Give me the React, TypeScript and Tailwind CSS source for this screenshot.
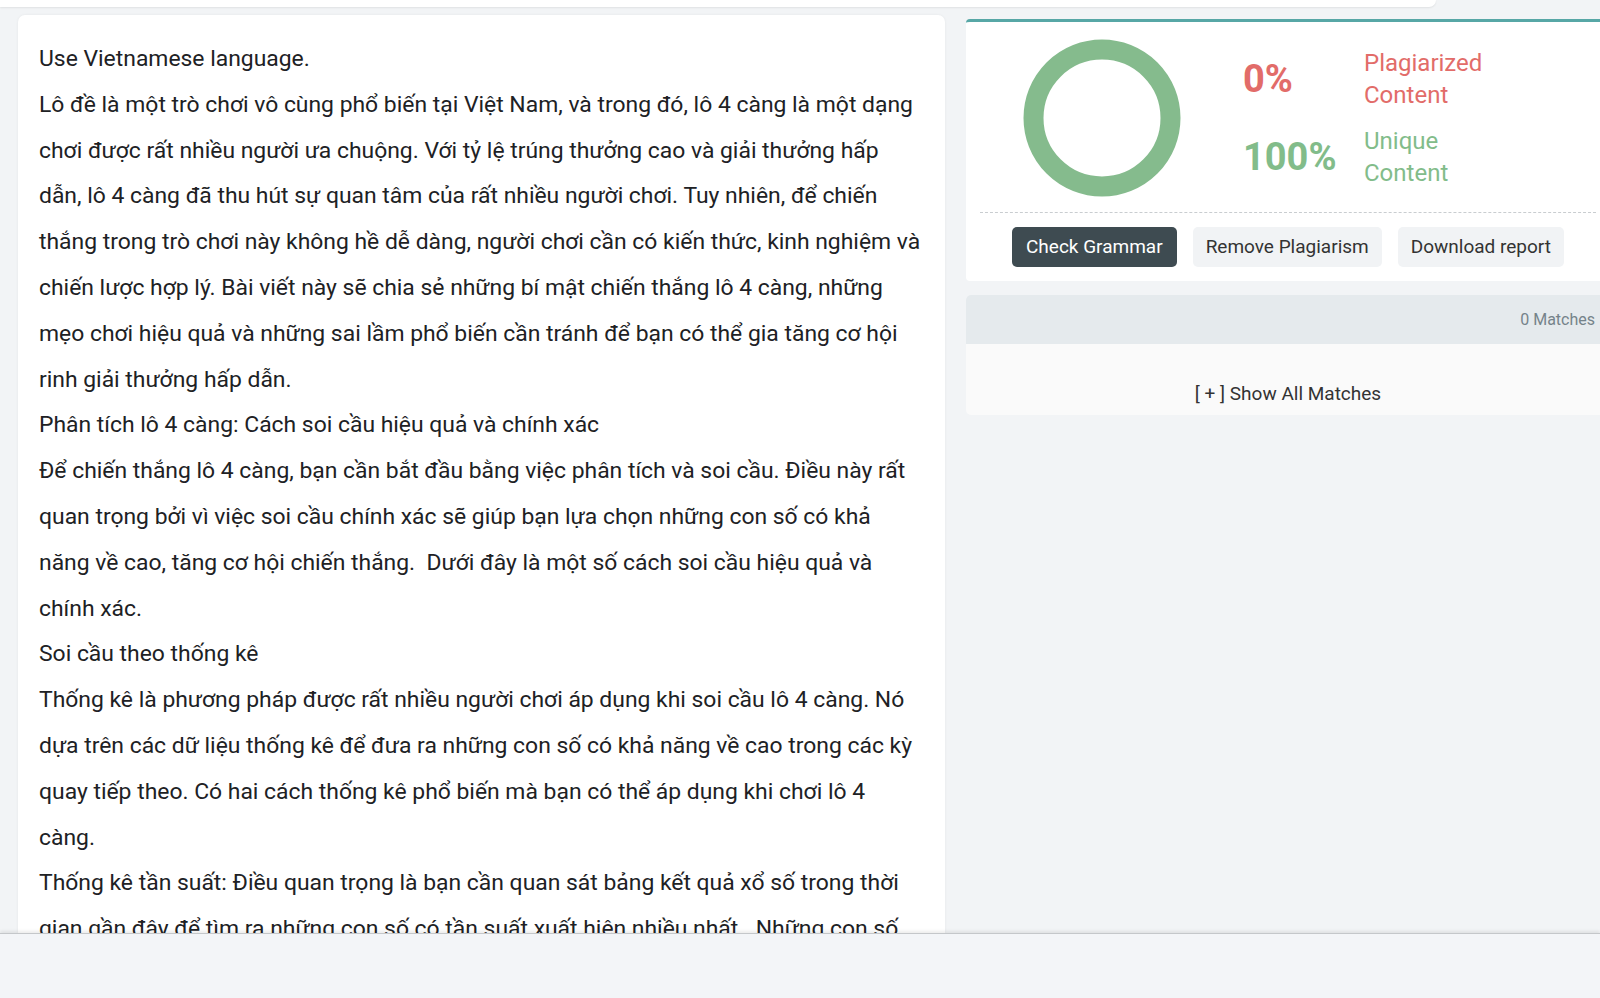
import React from "react";

const paragraphs: string[][] = [
  ["Use Vietnamese language."],
  [
    "Lô đề là một trò chơi vô cùng phổ biến tại Việt Nam, và trong đó, lô 4 càng là một dạng",
    "chơi được rất nhiều người ưa chuộng. Với tỷ lệ trúng thưởng cao và giải thưởng hấp",
    "dẫn, lô 4 càng đã thu hút sự quan tâm của rất nhiều người chơi. Tuy nhiên, để chiến",
    "thắng trong trò chơi này không hề dễ dàng, người chơi cần có kiến thức, kinh nghiệm và",
    "chiến lược hợp lý. Bài viết này sẽ chia sẻ những bí mật chiến thắng lô 4 càng, những",
    "mẹo chơi hiệu quả và những sai lầm phổ biến cần tránh để bạn có thể gia tăng cơ hội",
    "rinh giải thưởng hấp dẫn.",
  ],
  ["Phân tích lô 4 càng: Cách soi cầu hiệu quả và chính xác"],
  [
    "Để chiến thắng lô 4 càng, bạn cần bắt đầu bằng việc phân tích và soi cầu. Điều này rất",
    "quan trọng bởi vì việc soi cầu chính xác sẽ giúp bạn lựa chọn những con số có khả",
    "năng về cao, tăng cơ hội chiến thắng.  Dưới đây là một số cách soi cầu hiệu quả và",
    "chính xác.",
  ],
  ["Soi cầu theo thống kê"],
  [
    "Thống kê là phương pháp được rất nhiều người chơi áp dụng khi soi cầu lô 4 càng. Nó",
    "dựa trên các dữ liệu thống kê để đưa ra những con số có khả năng về cao trong các kỳ",
    "quay tiếp theo. Có hai cách thống kê phổ biến mà bạn có thể áp dụng khi chơi lô 4",
    "càng.",
  ],
  [
    "Thống kê tần suất: Điều quan trọng là bạn cần quan sát bảng kết quả xổ số trong thời",
    "gian gần đây để tìm ra những con số có tần suất xuất hiện nhiều nhất.  Những con số",
  ],
];

function Ring() {
  return (
    <svg width="158" height="158" viewBox="0 0 158 158">
      <circle cx="79" cy="79" r="68.5" fill="none" stroke="#85bb8d" strokeWidth="20" />
    </svg>
  );
}

export default function App() {
  return (
    <div className="relative flex h-[998px] w-[1600px] flex-col overflow-hidden bg-[#f2f4f6] font-['Roboto','Noto_Sans',sans-serif]">
      <div className="h-[7px] w-[1436px] shrink-0 rounded-br-[12px] bg-white shadow-[0_1px_2px_rgba(0,0,0,0.08)]" />
      <div className="flex min-h-0 flex-1 gap-[21px] overflow-hidden pl-[18px] pt-[8px]">
        <div className="w-[927px] shrink-0 rounded-t-[7px] bg-white px-[21px] pt-[21px] shadow-[0_0_3px_rgba(0,0,0,0.06)]">
          <div className="text-[22.9px] leading-[45.8px] text-[#202124]">
            {paragraphs.map((lines, i) => (
              <p key={i} className="whitespace-pre">
                {lines.map((l, j) => (
                  <React.Fragment key={j}>
                    {l}
                    {j < lines.length - 1 && <br />}
                  </React.Fragment>
                ))}
              </p>
            ))}
          </div>
        </div>
        <div className="flex w-[644px] shrink-0 flex-col gap-[14px] pt-[4px]">
          <div className="rounded-[4px] border-t-[3px] border-[#57a7a6] bg-white px-[14px] pb-[14px]">
            <div className="flex items-center pb-[15px] pl-[43px] pt-[17px]">
              <Ring />
              <div className="ml-[62px] flex flex-col gap-[14px]">
                <div className="flex items-center">
                  <div className="w-[121px] text-[38px] font-bold leading-none text-[#e26c69]">0%</div>
                  <div className="text-[24px] leading-[32px] text-[#e26c69]">
                    Plagiarized
                    <br />
                    Content
                  </div>
                </div>
                <div className="flex items-center">
                  <div className="w-[121px] text-[38px] font-bold leading-none text-[#82bc8a]">100%</div>
                  <div className="text-[24px] leading-[32px] text-[#82bc8a]">
                    Unique
                    <br />
                    Content
                  </div>
                </div>
              </div>
            </div>
            <div className="border-t border-dashed border-[#c9cdd0]" />
            <div className="flex justify-center gap-[16px] pt-[14px]">
              <button className="h-[40px] rounded-[5px] bg-[#3e4b51] px-[14px] text-[19px] text-white">
                Check Grammar
              </button>
              <button className="h-[40px] rounded-[5px] bg-[#f1f3f5] px-[13px] text-[19px] text-[#333]">
                Remove Plagiarism
              </button>
              <button className="h-[40px] rounded-[5px] bg-[#f1f3f5] px-[13px] text-[19px] text-[#333]">
                Download report
              </button>
            </div>
          </div>
          <div className="overflow-hidden rounded-[5px] bg-[#fafafa]">
            <div className="flex h-[49px] items-center justify-end bg-[#e5eaed] pr-[15px] text-[16px] text-[#75838a]">
              0 Matches
            </div>
            <div className="flex h-[71px] items-start justify-center pt-[38px] text-[19px] leading-[24px] text-[#333]">
              [ + ] Show All Matches
            </div>
          </div>
        </div>
      </div>
      <div className="h-[65px] shrink-0 border-t border-[#c4c7ca] bg-[#f3f5f8] shadow-[0_-2px_3px_rgba(0,0,0,0.08)]" />
    </div>
  );
}
